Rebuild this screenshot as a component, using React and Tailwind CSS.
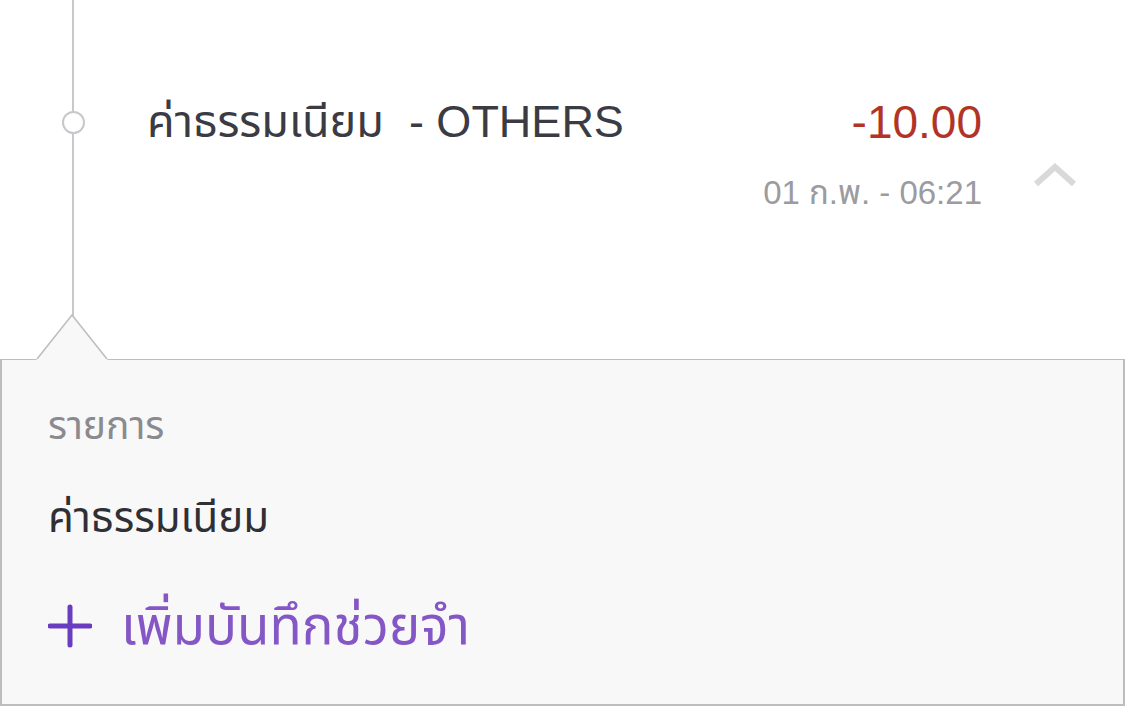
export default function App() {
  return (
    <div className="w-[1125px] h-[706px] bg-white overflow-hidden font-['Liberation_Sans','Noto_Sans','Noto_Sans_Thai',sans-serif]">
      <div className="relative h-[359px]">
        {/* timeline */}
        <div className="absolute left-[72px] top-0 h-[316px] w-[2px] bg-[#c8c8cc]" />
        <div className="absolute left-[62px] top-[111px] w-[23px] h-[23px] rounded-full border-2 border-[#c8c8cc] bg-white" />

        <div className="flex pl-[147px] pt-[97px]">
          <div className="flex-1 text-[45px] leading-[50px] text-[#3b3b44] whitespace-pre">ค่าธรรมเนียม  - OTHERS</div>
          <div className="flex flex-col items-end">
            <div className="text-[46px] leading-[50px] text-[#b23426]">-10.00</div>
            <div className="mt-[27px] text-[33px] leading-[38px] text-[#9b9ba0]">01 ก.พ. - 06:21</div>
          </div>
          <div className="ml-[51px] mr-[48px] mt-[66px] w-[44px] h-[24px]">
            <svg width="44" height="24" viewBox="0 0 44 24">
              <path d="M3 21 L22 4 L41 21" fill="none" stroke="#d9d9d9" strokeWidth="6" />
            </svg>
          </div>
        </div>

        {/* pointer arrow */}
        <svg className="absolute left-[36px] top-[314px]" width="72" height="47" viewBox="0 0 72 47">
          <path d="M0 46 L36 1 L72 46 Z" fill="#f8f8f8" />
          <path d="M1 45 L36 1 L71 45" fill="none" stroke="#bdbdbd" strokeWidth="1.5" />
        </svg>
      </div>

      <div className="h-[347px] bg-[#f8f8f8] border-2 border-[#bdbdbd] border-t-[1.5px] px-[46px] pt-[44px]">
        <div className="text-[39px] leading-[44px] text-[#8a8a8f]">รายการ</div>
        <div className="mt-[46px] text-[42px] leading-[48px] text-[#2f2f35]">ค่าธรรมเนียม</div>
        <div className="mt-[54px] flex items-center">
          <svg width="44" height="44" viewBox="0 0 44 44" className="shrink-0">
            <path d="M2 22 H42 M22 3 V41" stroke="#6a3cbf" strokeWidth="5" strokeLinecap="round" />
          </svg>
          <div className="ml-[29px] text-[53px] leading-[60px] text-[#8556c6]">เพิ่มบันทึกช่วยจำ</div>
        </div>
      </div>
    </div>
  )
}
